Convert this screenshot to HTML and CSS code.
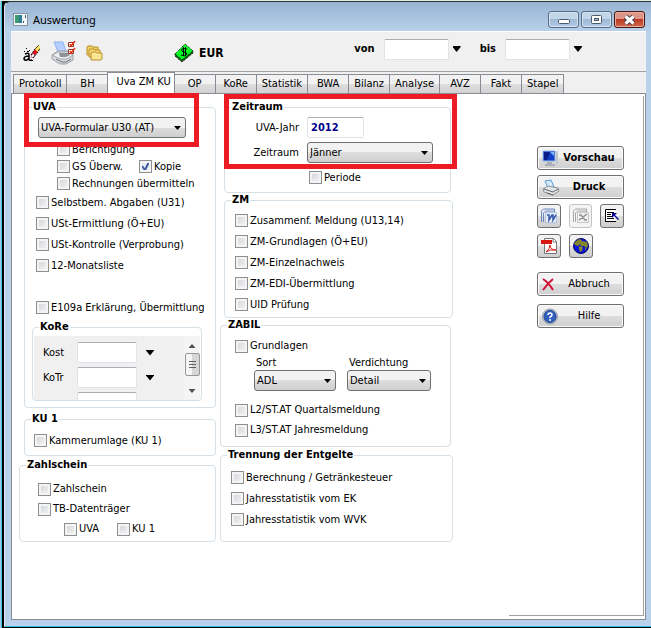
FILE: index.html
```html
<!DOCTYPE html>
<html lang="de">
<head>
  <meta charset="UTF-8">
  <meta name="viewport" content="width=device-width, initial-scale=1.0">
  <title>Auswertung</title>
  <link rel="stylesheet" href="styles.css">
</head>
<body>

  <div class="window">
    <header class="titlebar">
      <svg class="app-icon" width="15" height="13" viewBox="0 0 15 13">
        <rect x="0.5" y="0.5" width="14" height="12" fill="#f4f7fa" stroke="#8794a3"/>
        <rect x="2" y="2" width="7" height="8" fill="#2f7f96"/>
        <path d="M2 2h4v8H2z" fill="#3c9a6e"/>
        <path d="M10 8h1v2h-1zM12 2h1v3h-1z" fill="#47617c"/>
      </svg>
      <h1 class="title">Auswertung</h1>
      <div class="window-buttons">
        <button class="win-button" aria-label="Minimieren">
          <svg class="low" width="12" height="5" viewBox="0 0 12 5"><rect x="0.5" y="0.5" width="11" height="4" rx="1" fill="#fff" stroke="#4d5a6a"/></svg>
        </button>
        <button class="win-button" aria-label="Maximieren">
          <svg width="11" height="9" viewBox="0 0 11 9"><rect x="0.5" y="0.5" width="10" height="8" rx="1" fill="#fff" stroke="#4d5a6a"/><rect x="3.5" y="3.5" width="4" height="2" fill="#9db7d3" stroke="#4d5a6a"/></svg>
        </button>
        <button class="win-button close" aria-label="Schließen">
          <svg width="13" height="10" viewBox="0 0 13 10"><path d="M2.500 1.500l8 7m0-7l-8 7" stroke="#4a4350" stroke-width="5"/><path d="M2.500 1.500l8 7m0-7l-8 7" stroke="#fff" stroke-width="3"/></svg>
        </button>
      </div>
    </header>

    <div class="client">
      <div class="toolbar">
        <button class="tool" aria-label="Löschen">
          <svg width="18" height="18" viewBox="0 0 18 18">
            <path d="M8 11l4-6 3 3-5 5z" fill="#e8121b"/>
            <path d="M8 12l2-3 2 3-3 2z" fill="#fff" stroke="#8a1010" stroke-width="0.500"/>
            <path d="M12 5l4-4 1 3-2 4z" fill="#ffe45a"/>
            <path d="M8 11l4-6 4-4M10 14l5-6 2-4" fill="none" stroke="#000" stroke-dasharray="2 1"/>
            <path d="M2 10q4-2 4 1v4q0 2 3 1M6 12q-5 0-5 3 2 3 5-1" fill="none" stroke="#000" stroke-width="1.500"/>
            <path d="M3 4h1v1H3zM6 6h1v1H6zM1 7h1v1H1zM4 7h2v1H4zM9 16h1v1H9z"/>
          </svg>
        </button>
        <button class="tool" aria-label="Druckauswahl">
          <svg width="25" height="24" viewBox="0 0 25 24">
            <path d="M3 1h9l3 10H7z" fill="#b5ceff" stroke="#8fb2f5"/>
            <path d="M1 14l6-4h11l4 4v5l-7 4H9l-8-5z" fill="#d7dade" stroke="#9ba0a7"/>
            <path d="M1 14l8 4h7l6-4-4-3H7z" fill="#eceef0" stroke="#a3a8ae"/>
            <path d="M8 12h9l2 2-4 2H9z" fill="#8d9298"/>
            <path d="M5 18l6 3h4l5-3" fill="none" stroke="#6d7278"/>
            <path d="M17.500 1.500h5v4h-5zM17.500 8.500h5v4h-5z" fill="#fff" stroke="#8c3a2c"/>
            <path d="M19 3l1 2 4-5M19 10l1 2 4-5" fill="none" stroke="#e9300f" stroke-width="1.500"/>
          </svg>
        </button>
        <button class="tool" aria-label="Ordner">
          <svg width="17" height="16" viewBox="0 0 17 16">
            <path d="M1 10V2l1-1h4l1 1h5v8z" fill="#f2cf62" stroke="#b8902a"/>
            <path d="M3 12V5l1-1h4l1 1h5v7z" fill="#f6d976" stroke="#b8902a"/>
            <path d="M5 15V8l1-1h4l1 1h5v6l-1 1z" fill="#fae594" stroke="#b8902a"/>
          </svg>
        </button>
        <div class="currency">
          <svg width="20" height="20" viewBox="0 0 20 20">
            <path d="M1 11v2l7 6 11-9V8z" fill="#0d6a14" stroke="#000" stroke-dasharray="1 1"/>
            <path d="M1 11L11 1l8 7L8 17z" fill="#00ff21" stroke="#000" stroke-dasharray="1 1"/>
            <path d="M13 6q-3-1-5 0-1 2 1 3 4 0 4 2-2 3-6 1M9.500 4v9M11.500 4v9" fill="none" stroke="#000"/>
          </svg>
          <strong>EUR</strong>
        </div>
        <div class="range">
          <label for="von">von</label>
          <input class="field range-field" id="von" type="text">
          <button class="arrow" aria-label="von wählen"></button>
          <label class="to" for="bis">bis</label>
          <input class="field range-field" id="bis" type="text">
          <button class="arrow" aria-label="bis wählen"></button>
        </div>
      </div>

      <nav class="tabs">
        <button class="tab">Protokoll</button>
        <button class="tab">BH</button>
        <button class="tab active">Uva ZM KU</button>
        <button class="tab">OP</button>
        <button class="tab">KoRe</button>
        <button class="tab">Statistik</button>
        <button class="tab">BWA</button>
        <button class="tab">Bilanz</button>
        <button class="tab">Analyse</button>
        <button class="tab">AVZ</button>
        <button class="tab">Fakt</button>
        <button class="tab">Stapel</button>
      </nav>

      <main class="page">
        <div class="sheet">
          <div class="column left">
            <fieldset class="group uva">
              <legend>UVA</legend>
              <select class="combo formular" aria-label="UVA-Formular">
                <option>UVA-Formular U30 (AT)</option>
              </select>
              <div class="sub-rows">
                <label class="check"><input type="checkbox">Berichtigung</label>
                <div class="pair">
                  <label class="check"><input type="checkbox">GS Überw.</label>
                  <label class="check"><input type="checkbox" checked>Kopie</label>
                </div>
                <label class="check"><input type="checkbox">Rechnungen übermitteln</label>
              </div>
              <div class="rows">
                <label class="check"><input type="checkbox">Selbstbem. Abgaben (U31)</label>
                <label class="check"><input type="checkbox">USt-Ermittlung (Ö+EU)</label>
                <label class="check"><input type="checkbox">USt-Kontrolle (Verprobung)</label>
                <label class="check"><input type="checkbox">12-Monatsliste</label>
                <label class="check apart"><input type="checkbox">E109a Erklärung, Übermittlung</label>
              </div>
              <fieldset class="group kore">
                <legend>KoRe</legend>
                <div class="kore-box">
                  <div class="kore-rows">
                    <div class="kore-row">
                      <label for="kost">Kost</label>
                      <input class="field" id="kost" type="text">
                      <button class="arrow" aria-label="Kost wählen"></button>
                    </div>
                    <div class="kore-row">
                      <label for="kotr">KoTr</label>
                      <input class="field" id="kotr" type="text">
                      <button class="arrow" aria-label="KoTr wählen"></button>
                    </div>
                    <div class="kore-row">
                      <span></span>
                      <input class="field" type="text" aria-label="Weitere">
                    </div>
                  </div>
                  <div class="scrollbar">
                    <span class="scroll-up"></span>
                    <span class="thumb"></span>
                    <span class="scroll-down"></span>
                  </div>
                </div>
              </fieldset>
              <div class="highlight"></div>
            </fieldset>

            <fieldset class="group ku">
              <legend>KU 1</legend>
              <label class="check"><input type="checkbox">Kammerumlage (KU 1)</label>
            </fieldset>

            <fieldset class="group zahlschein">
              <legend>Zahlschein</legend>
              <label class="check"><input type="checkbox">Zahlschein</label>
              <label class="check"><input type="checkbox">TB-Datenträger</label>
              <div class="pair">
                <label class="check"><input type="checkbox">UVA</label>
                <label class="check"><input type="checkbox">KU 1</label>
              </div>
            </fieldset>
          </div>

          <div class="column middle">
            <fieldset class="group zeitraum">
              <legend>Zeitraum</legend>
              <div class="form-grid">
                <label for="jahr">UVA-Jahr</label>
                <input class="field year" id="jahr" type="text" value="2012">
                <label for="monat">Zeitraum</label>
                <select class="combo" id="monat">
                  <option>Jänner</option>
                </select>
              </div>
              <label class="check periode"><input type="checkbox">Periode</label>
              <div class="highlight"></div>
            </fieldset>

            <fieldset class="group zm">
              <legend>ZM</legend>
              <label class="check"><input type="checkbox">Zusammenf. Meldung (U13,14)</label>
              <label class="check"><input type="checkbox">ZM-Grundlagen (Ö+EU)</label>
              <label class="check"><input type="checkbox">ZM-Einzelnachweis</label>
              <label class="check"><input type="checkbox">ZM-EDI-Übermittlung</label>
              <label class="check"><input type="checkbox">UID Prüfung</label>
            </fieldset>

            <fieldset class="group zabil">
              <legend>ZABIL</legend>
              <label class="check"><input type="checkbox">Grundlagen</label>
              <div class="sort-grid">
                <label for="sort">Sort</label>
                <label for="verdichtung">Verdichtung</label>
                <select class="combo" id="sort">
                  <option>ADL</option>
                </select>
                <select class="combo" id="verdichtung">
                  <option>Detail</option>
                </select>
              </div>
              <label class="check"><input type="checkbox">L2/ST.AT Quartalsmeldung</label>
              <label class="check"><input type="checkbox">L3/ST.AT Jahresmeldung</label>
            </fieldset>

            <fieldset class="group trennung">
              <legend>Trennung der Entgelte</legend>
              <label class="check"><input type="checkbox">Berechnung / Getränkesteuer</label>
              <label class="check"><input type="checkbox">Jahresstatistik vom EK</label>
              <label class="check"><input type="checkbox">Jahresstatistik vom WVK</label>
            </fieldset>
          </div>

          <aside class="actions">
            <button class="button strong">
              <svg width="18" height="17" viewBox="0 0 18 17">
                <path d="M1 1h12v10H1z" fill="#1440c8" stroke="#8fb4de"/>
                <path d="M2 2h6L5 10H2z" fill="#0a1c86"/>
                <path d="M8 2h4v4z" fill="#7cb6ff"/>
                <path d="M14 1h2v13h-2z" fill="#c3c8cf"/>
                <path d="M5 12h5v2H5zM3 14h10v2H3z" fill="#a9afb8"/>
              </svg>
              <span>Vorschau</span>
            </button>
            <button class="button strong">
              <svg width="18" height="17" viewBox="0 0 18 17">
                <path d="M3 2l6-1 3 7-6 1z" fill="#d5ebfb" stroke="#5d9cd0"/>
                <path d="M1 10l5-3 10 2 1 3-6 4-9-3z" fill="#e2e4e6" stroke="#8b9096"/>
                <path d="M2 10l9 3 5-3M5 14l6 2" fill="none" stroke="#62676d"/>
              </svg>
              <span>Druck</span>
            </button>
            <div class="icon-row">
              <button class="icon-button" aria-label="Word">
                <svg width="18" height="18" viewBox="0 0 18 18">
                  <path d="M1.500 15V4l2-2h11v3M3.500 15V6l2-2h9" fill="none" stroke="#6a86c0"/>
                  <path d="M5.500 5.500h11v10h-11z" fill="#e7eefb" stroke="#b4c3e2"/>
                  <path d="M7 8h2v5l3-5h1v5l3-5" fill="none" stroke="#3558a8" stroke-width="1.500"/>
                </svg>
              </button>
              <button class="icon-button" aria-label="Excel" disabled>
                <svg width="18" height="18" viewBox="0 0 18 18">
                  <path d="M1.500 15V4l2-2h11v3M3.500 15V6l2-2h9" fill="none" stroke="#a8a8a8"/>
                  <path d="M5.500 5.500h11v10h-11z" fill="#f2f2f2" stroke="#c8c8c8"/>
                  <path d="M7 8h2l4 5h2M15 7l-8 6" fill="none" stroke="#8f8f8f" stroke-width="1.500"/>
                </svg>
              </button>
              <button class="icon-button" aria-label="Liste">
                <svg width="18" height="18" viewBox="0 0 18 18">
                  <path d="M2.500 2.500h10v12h-10z" fill="#fff"/>
                  <path d="M2.500 14V2.500H13M2 14.500h11M4 5.500h7M4 7.500h4M4 9.500h5M4 11.500h7" fill="none" stroke="#000"/>
                  <path d="M9 6h5l-2 2 4 4-1 1-4-4-2 2z" fill="#0b0b9c"/>
                </svg>
              </button>
            </div>
            <div class="icon-row second">
              <button class="icon-button" aria-label="PDF">
                <svg width="18" height="18" viewBox="0 0 18 18">
                  <path d="M4.500 1.500h9l3 3v12h-12z" fill="#fff" stroke="#777"/>
                  <path d="M13 2v3h3" fill="none" stroke="#777"/>
                  <path d="M1 3h11v4H1z" fill="#d8150f"/>
                  <path d="M6 15q4-3 4-7 0 5 6 5-6-1-10 2z" fill="none" stroke="#d8150f"/>
                </svg>
              </button>
              <button class="icon-button" aria-label="Web">
                <svg width="18" height="18" viewBox="0 0 18 18">
                  <circle cx="9" cy="9" r="7.500" fill="#0a12d8" stroke="#04065a"/>
                  <path d="M2 6l5-4 3 1-1 3-3 3-3-1zM10 4l5 1 1 4-2 2-2-2-3 0-1-2zM7 9l4 1-1 4-2 1-1-3zM13 11l2-1-2 4z" fill="#85852a"/>
                </svg>
              </button>
            </div>
            <button class="button">
              <svg width="18" height="17" viewBox="0 0 18 17">
                <path d="M1 3q6 4 10 11M11 3Q6 7 1 14" fill="none" stroke="#cf1238" stroke-width="2"/>
              </svg>
              <span>Abbruch</span>
            </button>
            <button class="button help">
              <svg width="18" height="17" viewBox="0 0 18 17">
                <circle cx="8" cy="8.500" r="7.500" fill="#c3cad4" stroke="#8f9aaa"/>
                <circle cx="8" cy="8.500" r="6" fill="#2f61bd" stroke="#1e428e"/>
                <path d="M6 7q0-2 2-2t2 2q0 1-2 2v1M8 11v2" fill="none" stroke="#fff" stroke-width="1.500"/>
              </svg>
              <span>Hilfe</span>
            </button>
          </aside>
        </div>
      </main>
    </div>
  </div>

</body>
</html>
```

FILE: styles.css
```css
* {
  box-sizing: border-box;
}

body {
  margin: 0;
  min-height: 100vh;
  display: flex;
  background: linear-gradient(90deg, #a9c6de 1px, #35c6dd 1px 2px, #000 2px);
  border-top: 1px solid #e4ecea;
  padding: 0 0 1px 4px;
  font-family: "DejaVu Sans Condensed", "Noto Sans", sans-serif;
  font-size: 11px;
  line-height: 14px;
  color: #000;
}

button, input, select {
  font: inherit;
  color: inherit;
  margin: 0;
}

.window {
  flex: 1;
  display: flex;
  flex-direction: column;
  padding: 0 5px 6px 6px;
  border: 1px solid #dce8f4;
  border-top-color: #2b3330;
  border-bottom-color: #2fc4de;
  border-right: 0;
  border-radius: 6px 0 0 0;
  background: linear-gradient(#98b4d2, #b9d1ea 30px);
}

.titlebar {
  display: flex;
  align-items: center;
  height: 29px;
  padding: 6px 1px 0 2px;
}

.title {
  margin: 0 auto 0 5px;
  font-family: "Noto Sans", sans-serif;
  font-size: 11px;
  font-weight: normal;
}

.window-buttons {
  display: flex;
  gap: 2px;
}

.win-button {
  display: flex;
  align-items: center;
  justify-content: center;
  width: 31px;
  height: 17px;
  padding: 0;
  border: 1px solid #566b85;
  border-radius: 3px;
  background: linear-gradient(#c3d5e9 50%, #9db8d6 50%, #b4cce6);
  box-shadow: inset 0 0 0 1px #d6e3f1;
}

.low {
  margin-top: 3px;
}

.close {
  border-color: #4a1414;
  background: linear-gradient(#dd9587 50%, #bb3a23 50%, #cf6a4c);
  box-shadow: inset 0 0 0 1px #e8b0a4;
}

.client {
  flex: 1;
  display: flex;
  flex-direction: column;
  background: #f0f0f0;
}

.toolbar {
  display: flex;
  align-items: center;
  height: 41px;
  padding: 3px 64px 0 12px;
  border-top: 1px solid #fff;
  border-bottom: 1px solid #a0a0a0;
}

.tool {
  display: flex;
  margin-right: 10px;
  padding: 0;
  border: 0;
  background: none;
}

.currency {
  display: flex;
  align-items: center;
  gap: 5px;
  margin-left: 61px;
  font-size: 12px;
}

.range {
  display: flex;
  align-items: center;
  margin: 0 0 8px auto;
  font-weight: bold;
}

.field {
  width: 60px;
  height: 21px;
  padding: 0 3px;
  border: 1px solid #e2e3ea;
  border-top-color: #abadb3;
  border-radius: 2px;
  background: #fff;
}

.range-field {
  width: 65px;
  margin-left: 9px;
}

.to {
  margin-left: 19px;
}

.arrow {
  width: 8px;
  height: 6px;
  margin-left: 4px;
  padding: 0;
  border: 0;
  background: #000;
  clip-path: polygon(0 0, 100% 0, 100% 17%, 50% 100%, 0 17%);
}

.tabs {
  display: flex;
  align-items: flex-end;
  height: 21px;
  padding-left: 2px;
}

.tab {
  min-width: 42px;
  height: 19px;
  margin-right: -1px;
  padding: 0 5px;
  border: 1px solid #898c95;
  border-bottom: 0;
  background: linear-gradient(#f2f2f2 50%, #dedede 50%, #d2d2d2);
  white-space: nowrap;
}

.tab.active {
  height: 21px;
  padding: 0 3px 2px 8px;
  background: #fff;
}

.page {
  flex: 1;
  display: flex;
  padding: 2px 1px 3px 0;
  border: 1px solid #898c95;
  background: #fff;
}

.sheet {
  position: relative;
  flex: 1;
  display: flex;
  align-items: flex-start;
  padding: 4px 19px 0 7px;
  border-right: 1px solid #a0a0a0;
}

/* short rule in the bottom right corner of the sheet */
.sheet::after {
  content: "";
  position: absolute;
  right: 0;
  bottom: 0;
  width: 134px;
  height: 1px;
  background: #a0a0a0;
}

.column {
  display: flex;
  flex-direction: column;
}

.left {
  width: 197px;
}

.middle {
  width: 233px;
  margin-left: 4px;
}

.group {
  position: relative;
  min-width: 0;
  margin: 0;
  padding: 0 10px;
  border: 1px solid #d5dfe5;
  border-radius: 4px;
}

.group > legend {
  margin-left: -4px;
  padding: 0 1px;
  font-weight: bold;
}

.check {
  display: flex;
  align-items: center;
  height: 21px;
  white-space: nowrap;
}

.check input {
  appearance: none;
  flex: none;
  width: 13px;
  height: 13px;
  margin: 0 2px 0 0;
  border: 1px solid #8e8f8f;
  background: linear-gradient(135deg, #cfd3d8, #f6f6f6);
  box-shadow: inset 0 0 0 2px #f4f4f4;
}

.check input:checked {
  background: #e9edf5 url("data:image/svg+xml,%3Csvg xmlns='http://www.w3.org/2000/svg' viewBox='0 0 11 11'%3E%3Cpath d='M2 5l3 4 4-8' fill='none' stroke='%23405ba0' stroke-width='2'/%3E%3C/svg%3E");
}

.pair {
  display: flex;
}

.combo {
  appearance: none;
  height: 21px;
  padding: 0 20px 0 2px;
  border: 1px solid #707070;
  border-radius: 3px;
  background:
    url("data:image/svg+xml,%3Csvg xmlns='http://www.w3.org/2000/svg' width='7' height='4'%3E%3Cpath d='M0 0h7L3.500 4z'/%3E%3C/svg%3E") no-repeat right 4px center,
    linear-gradient(#f2f2f2 50%, #dddddd 50%, #cfcfcf);
}

.highlight {
  position: absolute;
  border: 5px solid #ed1c24;
  pointer-events: none;
}

.uva {
  margin-left: 5px;
  padding: 3px 13px 6px 11px;
}

.uva .highlight {
  top: -21px;
  left: -1px;
  width: 175px;
  height: 54px;
}

.formular {
  display: block;
  width: 148px;
  margin-left: 2px;
}

.sub-rows {
  margin: 3px 0 0 21px;
}

.sub-rows .check {
  height: 17px;
}

.sub-rows .pair {
  gap: 16px;
}

.apart {
  margin-top: 21px;
}

.kore {
  margin: 2px 0 0 -4px;
  padding: 0 1px;
}

.kore > legend {
  margin-left: 5px;
}

.kore-box {
  display: flex;
  justify-content: space-between;
  height: 64px;
  margin-top: 2px;
  overflow: hidden;
  background: #f0f0f0;
}

.kore-rows {
  display: flex;
  flex-direction: column;
  gap: 4px;
  padding: 6px 0 0 9px;
}

.kore-row {
  display: grid;
  grid-template-columns: 34px 60px 17px;
  align-items: center;
}

.kore-row .arrow {
  margin-left: 9px;
}

.scrollbar {
  display: flex;
  flex-direction: column;
  align-items: center;
  justify-content: space-between;
  width: 16px;
  padding: 8px 0 7px;
  background: #f4f4f4;
}

.scroll-up, .scroll-down {
  width: 7px;
  height: 4px;
  background: #505050;
  clip-path: polygon(50% 0, 100% 100%, 0 100%);
}

.scroll-down {
  clip-path: polygon(0 0, 100% 0, 50% 100%);
}

.thumb {
  width: 15px;
  height: 23px;
  margin-bottom: 8px;
  border: 1px solid #979797;
  border-radius: 2px;
  background:
    repeating-linear-gradient(#606060 0 1px, transparent 1px 3px) no-repeat center / 7px 7px,
    linear-gradient(90deg, #f4f4f4 50%, #d6d6d6 50%);
}

.ku {
  margin: 4px 0 0 5px;
  padding: 4px 9px;
}

.ku > legend {
  margin-left: -3px;
}

.zahlschein {
  margin-top: 2px;
  padding: 7px 18px 2px;
}

.zahlschein > legend {
  margin-left: -12px;
}

.zahlschein .check {
  height: 20px;
}

.zahlschein .pair {
  gap: 18px;
  margin-left: 26px;
}

.zeitraum {
  margin: 0 2px 0 4px;
  padding: 3px 17px 4px;
}

.zeitraum .highlight {
  top: -20px;
  left: -1px;
  right: -7px;
  height: 75px;
}

.zeitraum > legend {
  margin-left: -11px;
}

.form-grid {
  display: grid;
  grid-template-columns: 57px 126px;
  align-items: center;
  gap: 4px 8px;
}

.form-grid label {
  text-align: right;
}

.year {
  width: 57px;
  color: #00008b;
  font-weight: bold;
}

.periode {
  margin: 4px 0 0 67px;
}

.zm {
  margin-left: 4px;
  padding: 3px 10px 2px;
}

.zabil {
  margin-right: 2px;
  padding: 4px 14px 6px;
}

.zabil .check {
  height: 20px;
}

.zabil > legend {
  margin-left: -8px;
}

.sort-grid {
  display: grid;
  grid-template-columns: 82px 84px;
  gap: 0 11px;
  margin: 0 0 9px 19px;
}

.sort-grid label {
  padding-left: 2px;
}

.trennung {
  margin-top: 1px;
  padding: 5px 10px 11px;
}

.trennung > legend {
  margin-left: -4px;
}

.actions {
  display: flex;
  flex-direction: column;
  width: 87px;
  margin: 46px 0 0 auto;
  gap: 5px;
}

.button {
  display: flex;
  align-items: center;
  height: 24px;
  margin-bottom: 3px;
  padding: 0 5px 0 4px;
  border: 1px solid #707070;
  border-radius: 3px;
  background: linear-gradient(#f2f2f2 50%, #dddddd 50%, #cfcfcf);
  box-shadow: inset 0 0 0 1px #fafafa;
}

.button svg {
  flex: none;
}

.button span {
  flex: 1;
  text-align: center;
}

.strong {
  margin-bottom: 0;
  font-weight: bold;
}

.icon-row {
  display: flex;
  gap: 8px;
}

.second {
  margin: 1px 0 9px;
}

.icon-button {
  display: flex;
  align-items: center;
  justify-content: center;
  width: 24px;
  height: 24px;
  padding: 0;
  border: 1px solid #707070;
  border-radius: 3px;
  background: linear-gradient(#f2f2f2 50%, #dddddd 50%, #cfcfcf);
}

.icon-button:disabled {
  border-color: #c4c4c4;
  background: #f4f4f4;
}
```
